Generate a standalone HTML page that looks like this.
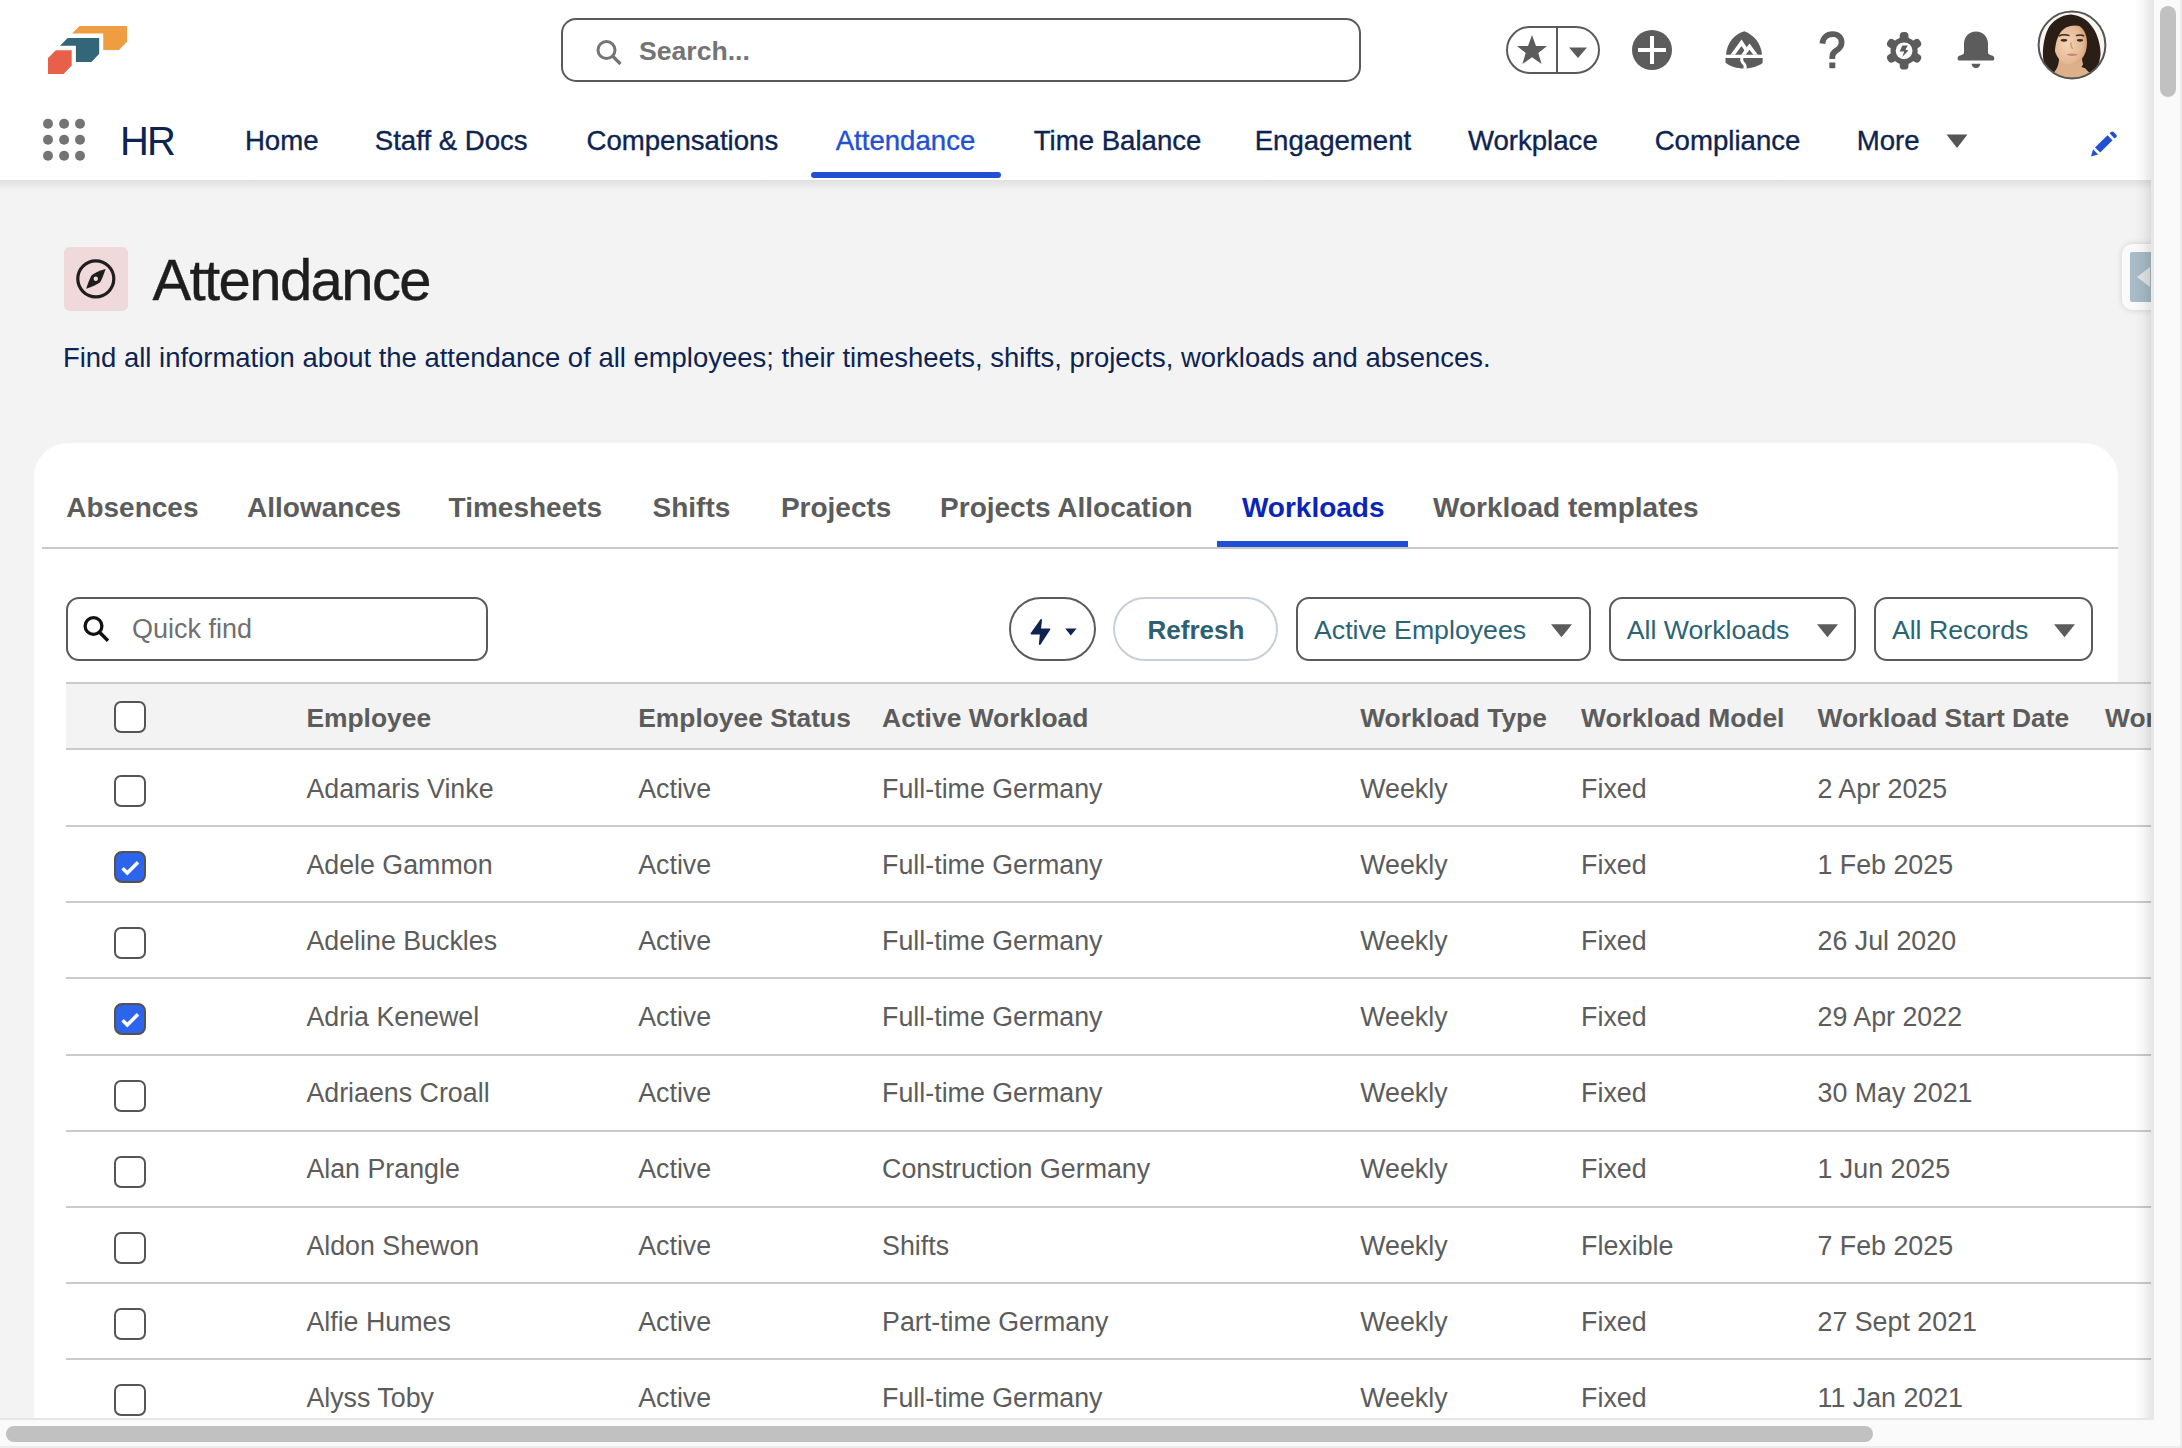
<!DOCTYPE html>
<html><head><meta charset="utf-8"><title>Attendance</title>
<style>
html,body{margin:0;padding:0;}
body{width:2182px;height:1448px;overflow:hidden;position:relative;background:#f3f3f3;font-family:"Liberation Sans", sans-serif;}
.a{position:absolute;}
.t{position:absolute;white-space:nowrap;}
</style></head><body>
<div class="a" style="left:0px;top:0px;width:2153px;height:180px;background:#fff;"></div>
<div class="a" style="left:0px;top:180px;width:2153px;height:10px;background:linear-gradient(#e0e0e0,#f3f3f3);"></div>
<svg class="a" style="left:0px;top:0px" width="200" height="90" viewBox="0 0 200 90">
<polygon fill="#f09d41" points="72,33.6 79.5,26 127,26 127,41.7 119,50 103.2,50 103.2,33.6"/>
<polygon fill="#336678" points="60,45.8 67.7,38 99.2,38 99.2,53.8 91.5,62 75.9,62 75.9,45.8"/>
<polygon fill="#e8604a" points="48,58 55.9,50.2 71.7,50.2 71.7,65.6 63.6,74 48,74"/>
</svg>
<div class="a" style="left:561px;top:18px;width:796px;height:60px;border:2px solid #5a5a5a;border-radius:15px;background:#fff;"></div>
<svg class="a" style="left:590px;top:34px" width="40" height="40" viewBox="0 0 40 40">
<circle cx="16.5" cy="16" r="8.5" fill="none" stroke="#747474" stroke-width="3"/>
<line x1="22.5" y1="22" x2="30.5" y2="30" stroke="#747474" stroke-width="3.2" stroke-linecap="butt"/>
</svg>
<div class="t" style="left:639.0px;top:37.5px;font-size:26.6px;line-height:26.6px;color:#747474;font-weight:bold;">Search...</div>
<div class="a" style="left:1506px;top:26px;width:90px;height:44px;border:2px solid #5a5a5a;border-radius:24px;background:#fff;"></div>
<div class="a" style="left:1556px;top:28px;width:2px;height:44px;background:#5a5a5a;"></div>
<svg class="a" style="left:1510px;top:28px" width="46" height="44" viewBox="0 0 46 44">
<polygon fill="#5c5c5c" points="22,7 26,18 37,18 28.3,24.9 31.6,36 22,29.3 12.4,36 15.7,24.9 7,18 18,18"/>
</svg>
<svg class="a" style="left:1565px;top:40px" width="26" height="24" viewBox="0 0 26 24">
<polygon fill="#5c5c5c" points="4,7.5 22,7.5 13,18"/>
</svg>
<svg class="a" style="left:1630px;top:28px" width="44" height="44" viewBox="0 0 44 44">
<circle cx="22" cy="22" r="20" fill="#5c5c5c"/>
<rect x="8" y="20" width="28" height="4" fill="#fff"/>
<rect x="20" y="8" width="4" height="28" fill="#fff"/>
</svg>
<svg class="a" style="left:1715px;top:25px" width="60" height="50" viewBox="0 0 60 50">
<defs><clipPath id="thc"><rect x="0" y="0" width="60" height="29.7"/></clipPath></defs>
<path fill="#5c5c5c" d="M11,29.7 C12,17 20,9 29.3,6.2 C39,10 46,18 47,29.7 Z"/>
<g clip-path="url(#thc)" fill="none" stroke="#fff" stroke-width="3.7" stroke-linejoin="miter" stroke-miterlimit="10">
<polyline points="16.3,31.8 26.5,17.8 31.2,24.8"/>
<polyline points="27.2,31.5 34.5,21.6 41.9,31.6"/>
</g>
<path fill="#5c5c5c" d="M10.4,33.1 L47.6,33.1 L47.6,38 C42,42 35,43.5 29,43.6 C22,43.5 15,41.5 10.6,37.8 Z"/>
<path fill="none" stroke="#fff" stroke-width="3" d="M27,32 C26,36 27.5,37.5 29.5,39.5 C30.5,41 30.5,42.5 29.5,45"/>
</svg>
<svg class="a" style="left:1810px;top:26px" width="44" height="50" viewBox="0 0 44 50">
<path fill="none" stroke="#5c5c5c" stroke-width="5.8" d="M12.4,17.6 C13,11.6 17,8.2 22.6,8.2 C28.3,8.2 31.6,12 31.6,16.6 C31.6,21 29,23 26,24.8 C23.5,26.4 22.3,28.3 22.3,31 L22.3,33"/>
<rect x="19.3" y="36.4" width="6" height="5.8" rx="0.8" fill="#5c5c5c"/>
</svg>
<svg class="a" style="left:1880px;top:25px" width="50" height="50" viewBox="0 0 50 50"><g fill="#5c5c5c"><circle cx="24.1" cy="25.8" r="13.6"/><rect x="19.70" y="7.00" width="8.8" height="10" rx="3.9" transform="rotate(0 24.1 25.8)"/><rect x="19.70" y="7.00" width="8.8" height="10" rx="3.9" transform="rotate(60 24.1 25.8)"/><rect x="19.70" y="7.00" width="8.8" height="10" rx="3.9" transform="rotate(120 24.1 25.8)"/><rect x="19.70" y="7.00" width="8.8" height="10" rx="3.9" transform="rotate(180 24.1 25.8)"/><rect x="19.70" y="7.00" width="8.8" height="10" rx="3.9" transform="rotate(240 24.1 25.8)"/><rect x="19.70" y="7.00" width="8.8" height="10" rx="3.9" transform="rotate(300 24.1 25.8)"/></g><circle cx="24.1" cy="25.8" r="8.4" fill="#fff"/><polygon fill="#5c5c5c" points="22.3,20.4 27.8,20.4 25.4,24.7 28.5,25.4 22.4,31.8 24.2,26.6 19.7,26.6"/></svg>
<svg class="a" style="left:1950px;top:25px" width="50" height="50" viewBox="0 0 50 50">
<path fill="#5c5c5c" d="M26,6.4 C19,6.4 14,12 14,18.5 L14,27.5 C14,29 12.5,29.8 10,30.5 C8,31 7.6,32.5 7.6,33.5 C7.6,34.8 8.3,35.6 9.5,35.6 L42.5,35.6 C43.7,35.6 44.3,34.8 44.3,33.5 C44.3,32.5 44,31 42,30.5 C39.5,29.8 38,29 38,27.5 L38,18.5 C38,12 33,6.4 26,6.4 Z"/>
<path fill="#5c5c5c" d="M21.4,38.8 L30.4,38.8 C30,41.5 28.5,43.2 26,43.2 C23.5,43.2 22,41.5 21.4,38.8 Z"/>
</svg>
<svg class="a" style="left:2036px;top:9px" width="72" height="72" viewBox="0 0 72 72">
<defs><clipPath id="avc"><circle cx="36" cy="36" r="33"/></clipPath>
<radialGradient id="skin" cx="0.4" cy="0.5" r="0.65"><stop offset="0" stop-color="#f3d5b6"/><stop offset="0.7" stop-color="#e6b894"/><stop offset="1" stop-color="#c9976f"/></radialGradient></defs>
<circle cx="36" cy="36" r="33" fill="#f8f6f0"/>
<g clip-path="url(#avc)">
<path fill="#2b1e16" d="M34.7,5.5 C25,6 16,12 12,20 C8,28 6.5,40 7,48 C7.5,56 10,62 14,70 L58,70 C61,62 63.5,54 64.5,46 C65,38 62,26 57,19 C52,11 44,6 34.7,5.5 Z"/>
<path fill="#ddb08a" d="M23,49 C23,56 21,62 13,68 L13,74 L60,74 L58,67 C50,62 46,56 46,49 Z"/>
<path fill="url(#skin)" d="M18,36 C17.5,24 24,15 34.5,14.5 C44.5,14.5 51,22 51,34 C51,46 44,55.5 34.7,55.8 C25,55.5 18.5,47 18,36 Z"/>
<path fill="#2b1e16" d="M11,42 C11,25 19,12 31,10 C40,9 47,12.5 51.5,20 C44,15.5 36,15.5 30,18.5 C23,22.5 19.5,31 18.8,44 Z"/>
<path fill="#2b1e16" d="M47.5,17 C52,23 53,34 51.5,44 C50.5,50 48,54 45.5,58 L57,62 C61,50 61.5,36 57.5,26 Z"/>
<path d="M22.5,27 Q28,24.8 33.5,26.6" stroke="#3a2a20" stroke-width="1.5" fill="none"/>
<path d="M40,26.6 Q44.5,25 48,27" stroke="#3a2a20" stroke-width="1.5" fill="none"/>
<ellipse cx="28" cy="31.3" rx="3.3" ry="1.4" fill="#3b2a20"/>
<ellipse cx="44" cy="31.3" rx="3.1" ry="1.4" fill="#3b2a20"/>
<path d="M35,33 Q34.5,38 36.9,39.8" stroke="#c99a76" stroke-width="1.3" fill="none"/>
<path d="M30.3,45.4 Q36,43.8 42.4,45.4 Q36,48.6 30.3,45.4 Z" fill="#c88679"/>
</g>
<circle cx="36" cy="36" r="33.4" fill="none" stroke="#555" stroke-width="2"/>
</svg>
<svg class="a" style="left:38px;top:113px" width="54" height="54" viewBox="0 0 54 54"><circle cx="10" cy="10.7" r="5" fill="#747474"/><circle cx="10" cy="26.8" r="5" fill="#747474"/><circle cx="10" cy="42.8" r="5" fill="#747474"/><circle cx="26.1" cy="10.7" r="5" fill="#747474"/><circle cx="26.1" cy="26.8" r="5" fill="#747474"/><circle cx="26.1" cy="42.8" r="5" fill="#747474"/><circle cx="42" cy="10.7" r="5" fill="#747474"/><circle cx="42" cy="26.8" r="5" fill="#747474"/><circle cx="42" cy="42.8" r="5" fill="#747474"/></svg>
<div class="t" style="left:120.0px;top:121.1px;font-size:40px;line-height:40px;color:#0d2452;font-weight:normal;letter-spacing:-2px;">HR</div>
<div class="t" style="left:244.9px;top:126.6px;font-size:27.6px;line-height:27.6px;color:#0d2452;font-weight:normal;-webkit-text-stroke:0.35px #0d2452;">Home</div>
<div class="t" style="left:374.8px;top:126.6px;font-size:27.6px;line-height:27.6px;color:#0d2452;font-weight:normal;-webkit-text-stroke:0.35px #0d2452;">Staff &amp; Docs</div>
<div class="t" style="left:586.5px;top:126.6px;font-size:27.6px;line-height:27.6px;color:#0d2452;font-weight:normal;-webkit-text-stroke:0.35px #0d2452;">Compensations</div>
<div class="t" style="left:835.7px;top:126.6px;font-size:27.6px;line-height:27.6px;color:#2250d4;font-weight:normal;-webkit-text-stroke:0.35px #2250d4;">Attendance</div>
<div class="t" style="left:1033.7px;top:126.6px;font-size:27.6px;line-height:27.6px;color:#0d2452;font-weight:normal;-webkit-text-stroke:0.35px #0d2452;">Time Balance</div>
<div class="t" style="left:1254.7px;top:126.6px;font-size:27.6px;line-height:27.6px;color:#0d2452;font-weight:normal;-webkit-text-stroke:0.35px #0d2452;">Engagement</div>
<div class="t" style="left:1467.9px;top:126.6px;font-size:27.6px;line-height:27.6px;color:#0d2452;font-weight:normal;-webkit-text-stroke:0.35px #0d2452;">Workplace</div>
<div class="t" style="left:1654.7px;top:126.6px;font-size:27.6px;line-height:27.6px;color:#0d2452;font-weight:normal;-webkit-text-stroke:0.35px #0d2452;">Compliance</div>
<div class="t" style="left:1856.7px;top:126.6px;font-size:27.6px;line-height:27.6px;color:#0d2452;font-weight:normal;-webkit-text-stroke:0.35px #0d2452;">More</div>
<div class="a" style="left:811px;top:172px;width:190px;height:6px;background:#2250d4;border-radius:3px;"></div>
<svg class="a" style="left:1940px;top:128px" width="34" height="26" viewBox="0 0 34 26">
<polygon fill="#555" points="6.5,6.5 27.5,6.5 17,20"/>
</svg>
<svg class="a" style="left:2080px;top:120px" width="50" height="50" viewBox="0 0 50 50">
<polygon fill="#2150d4" points="13.1,29.3 11,36.6 18.1,34.5"/>
<polygon fill="#2150d4" points="15,27.5 27.5,15.2 32.5,20.2 20.2,32.6"/>
<path fill="#2150d4" d="M29.7,13.3 L31,12 C31.8,11.2 32.8,11.2 33.6,12 L36.3,14.7 C37,15.4 37,16.4 36.3,17.2 L34.4,18.6 Z"/>
</svg>
<div class="a" style="left:64px;top:247px;width:64px;height:64px;background:#f0d9da;border-radius:6px;"></div>
<svg class="a" style="left:64px;top:247px" width="64" height="64" viewBox="0 0 64 64">
<circle cx="31.8" cy="31.8" r="18" fill="none" stroke="#1e1e1e" stroke-width="3.2"/>
<path fill="#1e1e1e" d="M41.6,22 Q38.8,30.5 36.2,35.2 Q31,39 22.2,41.7 Q25,33 27.6,28.3 Q32.5,24.6 41.6,22 Z"/>
<circle cx="31.8" cy="31.8" r="2.2" fill="#f0d9da"/>
</svg>
<div class="t" style="left:152.5px;top:251.1px;font-size:58px;line-height:58px;color:#1e1e1e;font-weight:normal;letter-spacing:-1.6px;-webkit-text-stroke:0.4px #1e1e1e;">Attendance</div>
<div class="t" style="left:63.0px;top:343.8px;font-size:27.45px;line-height:27.45px;color:#0d2452;font-weight:normal;">Find all information about the attendance of all employees; their timesheets, shifts, projects, workloads and absences.</div>
<div class="a" style="left:2122px;top:244px;width:40px;height:66px;background:#fafafa;border-radius:10px;box-shadow:0 0 6px rgba(0,0,0,0.15);"></div>
<div class="a" style="left:2130px;top:252px;width:30px;height:50px;background:linear-gradient(90deg,#a9bdc8,#a3b6c1);border-radius:2px;"></div>
<svg class="a" style="left:2130px;top:252px" width="24" height="50" viewBox="0 0 24 50">
<polygon fill="#e2e2e2" points="7,25 20,15 20,35"/></svg>
<div class="a" style="left:34px;top:443px;width:2084px;height:1100px;background:#fff;border-radius:34px 34px 0 0;"></div>
<div class="a" style="left:2118px;top:750px;width:35px;height:668px;background:#fff;"></div>
<div class="t" style="left:66.2px;top:493.6px;font-size:28px;line-height:28px;color:#5c5c5c;font-weight:bold;">Absences</div>
<div class="t" style="left:247.1px;top:493.6px;font-size:28px;line-height:28px;color:#5c5c5c;font-weight:bold;">Allowances</div>
<div class="t" style="left:448.6px;top:493.6px;font-size:28px;line-height:28px;color:#5c5c5c;font-weight:bold;">Timesheets</div>
<div class="t" style="left:652.5px;top:493.6px;font-size:28px;line-height:28px;color:#5c5c5c;font-weight:bold;">Shifts</div>
<div class="t" style="left:780.9px;top:493.6px;font-size:28px;line-height:28px;color:#5c5c5c;font-weight:bold;">Projects</div>
<div class="t" style="left:940.1px;top:493.6px;font-size:28px;line-height:28px;color:#5c5c5c;font-weight:bold;">Projects Allocation</div>
<div class="t" style="left:1241.9px;top:493.6px;font-size:28px;line-height:28px;color:#0b25b8;font-weight:bold;">Workloads</div>
<div class="t" style="left:1433.1px;top:493.6px;font-size:28px;line-height:28px;color:#5c5c5c;font-weight:bold;">Workload templates</div>
<div class="a" style="left:42px;top:547px;width:2076px;height:2px;background:#c9c9c9;"></div>
<div class="a" style="left:1217px;top:541px;width:191px;height:6px;background:#2150d4;"></div>
<div class="a" style="left:66px;top:597px;width:418px;height:60px;border:2px solid #5a5a5a;border-radius:13px;background:#fff;"></div>
<svg class="a" style="left:78px;top:611px" width="36" height="36" viewBox="0 0 36 36">
<circle cx="15.5" cy="15" r="8.4" fill="none" stroke="#111" stroke-width="3.3"/>
<line x1="21.3" y1="21" x2="30" y2="29.8" stroke="#111" stroke-width="3.4"/>
</svg>
<div class="t" style="left:132.0px;top:616.2px;font-size:27px;line-height:27px;color:#707070;font-weight:normal;">Quick find</div>
<div class="a" style="left:1009px;top:597px;width:83px;height:60px;border:2px solid #5a5a5a;border-radius:32px;background:#fff;"></div>
<svg class="a" style="left:1020px;top:605px" width="70" height="50" viewBox="0 0 70 50">
<path fill="#0e2350" stroke="#0e2350" stroke-width="1.6" stroke-linejoin="round" d="M21.2,14.8 L11.3,28.7 L20.7,28.7 L19.7,39.2 L29.5,24.2 L20.2,24.2 Z"/>
<polygon fill="#0e2350" points="45.2,23.5 56.6,23.5 50.8,30.4"/>
</svg>
<div class="a" style="left:1113px;top:597px;width:161px;height:60px;border:2px solid #c6cfdb;border-radius:32px;background:#fff;"></div>
<div class="t" style="left:1147.5px;top:617.2px;font-size:26px;line-height:26px;color:#2d6073;font-weight:bold;">Refresh</div>
<div class="a" style="left:1295.6px;top:597px;width:291.60000000000014px;height:60px;border:2px solid #5a5a5a;border-radius:13px;background:#fff;"></div>
<div class="t" style="left:1314.0px;top:616.6px;font-size:26.7px;line-height:26.7px;color:#2a6475;font-weight:normal;">Active Employees</div>
<svg class="a" style="left:1549.3px;top:620px" width="26" height="22" viewBox="0 0 26 22"><polygon fill="#5c5c5c" points="2,4.3 23,4.3 12.5,17.2"/></svg>
<div class="a" style="left:1608.6px;top:597px;width:243.80000000000018px;height:60px;border:2px solid #5a5a5a;border-radius:13px;background:#fff;"></div>
<div class="t" style="left:1626.7px;top:616.6px;font-size:26.7px;line-height:26.7px;color:#2a6475;font-weight:normal;">All Workloads</div>
<svg class="a" style="left:1814.9px;top:620px" width="26" height="22" viewBox="0 0 26 22"><polygon fill="#5c5c5c" points="2,4.3 23,4.3 12.5,17.2"/></svg>
<div class="a" style="left:1873.6px;top:597px;width:215.70000000000027px;height:60px;border:2px solid #5a5a5a;border-radius:13px;background:#fff;"></div>
<div class="t" style="left:1891.9px;top:616.6px;font-size:26.7px;line-height:26.7px;color:#2a6475;font-weight:normal;">All Records</div>
<svg class="a" style="left:2052px;top:620px" width="26" height="22" viewBox="0 0 26 22"><polygon fill="#5c5c5c" points="2,4.3 23,4.3 12.5,17.2"/></svg>
<div class="a" style="left:66px;top:682px;width:2087px;height:68px;background:#f3f3f3;border-top:2px solid #cbcbcb;border-bottom:2px solid #cbcbcb;box-sizing:border-box;"></div>
<div class="a" style="left:114px;top:701px;width:28px;height:28px;border:2px solid #555;border-radius:7px;background:#fff;"></div>
<div class="t" style="left:306.4px;top:704.6px;font-size:26.4px;line-height:26.4px;color:#5c5c5c;font-weight:bold;">Employee</div>
<div class="t" style="left:638.2px;top:704.6px;font-size:26.4px;line-height:26.4px;color:#5c5c5c;font-weight:bold;">Employee Status</div>
<div class="t" style="left:882.1px;top:704.6px;font-size:26.4px;line-height:26.4px;color:#5c5c5c;font-weight:bold;">Active Workload</div>
<div class="t" style="left:1360.2px;top:704.6px;font-size:26.4px;line-height:26.4px;color:#5c5c5c;font-weight:bold;">Workload Type</div>
<div class="t" style="left:1581.1px;top:704.6px;font-size:26.4px;line-height:26.4px;color:#5c5c5c;font-weight:bold;">Workload Model</div>
<div class="t" style="left:1817.5px;top:704.6px;font-size:26.4px;line-height:26.4px;color:#5c5c5c;font-weight:bold;">Workload Start Date</div>
<div class="t" style="left:2105.0px;top:704.6px;font-size:26.4px;line-height:26.4px;color:#5c5c5c;font-weight:bold;">Workload End Date</div>
<div class="a" style="left:66px;top:825px;width:2087px;height:2px;background:#cbcbcb;"></div>
<div class="a" style="left:114px;top:775px;width:28px;height:28px;border:2px solid #555;border-radius:7px;background:#fff;"></div>
<div class="t" style="left:306.4px;top:775.7px;font-size:26.8px;line-height:26.8px;color:#5c5c5c;font-weight:normal;">Adamaris Vinke</div>
<div class="t" style="left:638.2px;top:775.7px;font-size:26.8px;line-height:26.8px;color:#5c5c5c;font-weight:normal;">Active</div>
<div class="t" style="left:882.1px;top:775.7px;font-size:26.8px;line-height:26.8px;color:#5c5c5c;font-weight:normal;">Full-time Germany</div>
<div class="t" style="left:1360.2px;top:775.7px;font-size:26.8px;line-height:26.8px;color:#5c5c5c;font-weight:normal;">Weekly</div>
<div class="t" style="left:1581.1px;top:775.7px;font-size:26.8px;line-height:26.8px;color:#5c5c5c;font-weight:normal;">Fixed</div>
<div class="t" style="left:1817.5px;top:775.7px;font-size:26.8px;line-height:26.8px;color:#5c5c5c;font-weight:normal;">2 Apr 2025</div>
<div class="a" style="left:66px;top:901px;width:2087px;height:2px;background:#cbcbcb;"></div>
<svg class="a" style="left:113px;top:850px" width="34" height="34" viewBox="0 0 34 34"><rect x="2" y="2" width="30" height="30" rx="7" fill="#2c64ec" stroke="#55534c" stroke-width="2"/><polyline points="9.6,18.3 14.3,23 25,12.2" fill="none" stroke="#fff" stroke-width="3.6"/></svg>
<div class="t" style="left:306.4px;top:851.8px;font-size:26.8px;line-height:26.8px;color:#5c5c5c;font-weight:normal;">Adele Gammon</div>
<div class="t" style="left:638.2px;top:851.8px;font-size:26.8px;line-height:26.8px;color:#5c5c5c;font-weight:normal;">Active</div>
<div class="t" style="left:882.1px;top:851.8px;font-size:26.8px;line-height:26.8px;color:#5c5c5c;font-weight:normal;">Full-time Germany</div>
<div class="t" style="left:1360.2px;top:851.8px;font-size:26.8px;line-height:26.8px;color:#5c5c5c;font-weight:normal;">Weekly</div>
<div class="t" style="left:1581.1px;top:851.8px;font-size:26.8px;line-height:26.8px;color:#5c5c5c;font-weight:normal;">Fixed</div>
<div class="t" style="left:1817.5px;top:851.8px;font-size:26.8px;line-height:26.8px;color:#5c5c5c;font-weight:normal;">1 Feb 2025</div>
<div class="a" style="left:66px;top:977px;width:2087px;height:2px;background:#cbcbcb;"></div>
<div class="a" style="left:114px;top:927px;width:28px;height:28px;border:2px solid #555;border-radius:7px;background:#fff;"></div>
<div class="t" style="left:306.4px;top:928.0px;font-size:26.8px;line-height:26.8px;color:#5c5c5c;font-weight:normal;">Adeline Buckles</div>
<div class="t" style="left:638.2px;top:928.0px;font-size:26.8px;line-height:26.8px;color:#5c5c5c;font-weight:normal;">Active</div>
<div class="t" style="left:882.1px;top:928.0px;font-size:26.8px;line-height:26.8px;color:#5c5c5c;font-weight:normal;">Full-time Germany</div>
<div class="t" style="left:1360.2px;top:928.0px;font-size:26.8px;line-height:26.8px;color:#5c5c5c;font-weight:normal;">Weekly</div>
<div class="t" style="left:1581.1px;top:928.0px;font-size:26.8px;line-height:26.8px;color:#5c5c5c;font-weight:normal;">Fixed</div>
<div class="t" style="left:1817.5px;top:928.0px;font-size:26.8px;line-height:26.8px;color:#5c5c5c;font-weight:normal;">26 Jul 2020</div>
<div class="a" style="left:66px;top:1054px;width:2087px;height:2px;background:#cbcbcb;"></div>
<svg class="a" style="left:113px;top:1002px" width="34" height="34" viewBox="0 0 34 34"><rect x="2" y="2" width="30" height="30" rx="7" fill="#2c64ec" stroke="#55534c" stroke-width="2"/><polyline points="9.6,18.3 14.3,23 25,12.2" fill="none" stroke="#fff" stroke-width="3.6"/></svg>
<div class="t" style="left:306.4px;top:1004.1px;font-size:26.8px;line-height:26.8px;color:#5c5c5c;font-weight:normal;">Adria Kenewel</div>
<div class="t" style="left:638.2px;top:1004.1px;font-size:26.8px;line-height:26.8px;color:#5c5c5c;font-weight:normal;">Active</div>
<div class="t" style="left:882.1px;top:1004.1px;font-size:26.8px;line-height:26.8px;color:#5c5c5c;font-weight:normal;">Full-time Germany</div>
<div class="t" style="left:1360.2px;top:1004.1px;font-size:26.8px;line-height:26.8px;color:#5c5c5c;font-weight:normal;">Weekly</div>
<div class="t" style="left:1581.1px;top:1004.1px;font-size:26.8px;line-height:26.8px;color:#5c5c5c;font-weight:normal;">Fixed</div>
<div class="t" style="left:1817.5px;top:1004.1px;font-size:26.8px;line-height:26.8px;color:#5c5c5c;font-weight:normal;">29 Apr 2022</div>
<div class="a" style="left:66px;top:1130px;width:2087px;height:2px;background:#cbcbcb;"></div>
<div class="a" style="left:114px;top:1080px;width:28px;height:28px;border:2px solid #555;border-radius:7px;background:#fff;"></div>
<div class="t" style="left:306.4px;top:1080.2px;font-size:26.8px;line-height:26.8px;color:#5c5c5c;font-weight:normal;">Adriaens Croall</div>
<div class="t" style="left:638.2px;top:1080.2px;font-size:26.8px;line-height:26.8px;color:#5c5c5c;font-weight:normal;">Active</div>
<div class="t" style="left:882.1px;top:1080.2px;font-size:26.8px;line-height:26.8px;color:#5c5c5c;font-weight:normal;">Full-time Germany</div>
<div class="t" style="left:1360.2px;top:1080.2px;font-size:26.8px;line-height:26.8px;color:#5c5c5c;font-weight:normal;">Weekly</div>
<div class="t" style="left:1581.1px;top:1080.2px;font-size:26.8px;line-height:26.8px;color:#5c5c5c;font-weight:normal;">Fixed</div>
<div class="t" style="left:1817.5px;top:1080.2px;font-size:26.8px;line-height:26.8px;color:#5c5c5c;font-weight:normal;">30 May 2021</div>
<div class="a" style="left:66px;top:1206px;width:2087px;height:2px;background:#cbcbcb;"></div>
<div class="a" style="left:114px;top:1156px;width:28px;height:28px;border:2px solid #555;border-radius:7px;background:#fff;"></div>
<div class="t" style="left:306.4px;top:1156.4px;font-size:26.8px;line-height:26.8px;color:#5c5c5c;font-weight:normal;">Alan Prangle</div>
<div class="t" style="left:638.2px;top:1156.4px;font-size:26.8px;line-height:26.8px;color:#5c5c5c;font-weight:normal;">Active</div>
<div class="t" style="left:882.1px;top:1156.4px;font-size:26.8px;line-height:26.8px;color:#5c5c5c;font-weight:normal;">Construction Germany</div>
<div class="t" style="left:1360.2px;top:1156.4px;font-size:26.8px;line-height:26.8px;color:#5c5c5c;font-weight:normal;">Weekly</div>
<div class="t" style="left:1581.1px;top:1156.4px;font-size:26.8px;line-height:26.8px;color:#5c5c5c;font-weight:normal;">Fixed</div>
<div class="t" style="left:1817.5px;top:1156.4px;font-size:26.8px;line-height:26.8px;color:#5c5c5c;font-weight:normal;">1 Jun 2025</div>
<div class="a" style="left:66px;top:1282px;width:2087px;height:2px;background:#cbcbcb;"></div>
<div class="a" style="left:114px;top:1232px;width:28px;height:28px;border:2px solid #555;border-radius:7px;background:#fff;"></div>
<div class="t" style="left:306.4px;top:1232.5px;font-size:26.8px;line-height:26.8px;color:#5c5c5c;font-weight:normal;">Aldon Shewon</div>
<div class="t" style="left:638.2px;top:1232.5px;font-size:26.8px;line-height:26.8px;color:#5c5c5c;font-weight:normal;">Active</div>
<div class="t" style="left:882.1px;top:1232.5px;font-size:26.8px;line-height:26.8px;color:#5c5c5c;font-weight:normal;">Shifts</div>
<div class="t" style="left:1360.2px;top:1232.5px;font-size:26.8px;line-height:26.8px;color:#5c5c5c;font-weight:normal;">Weekly</div>
<div class="t" style="left:1581.1px;top:1232.5px;font-size:26.8px;line-height:26.8px;color:#5c5c5c;font-weight:normal;">Flexible</div>
<div class="t" style="left:1817.5px;top:1232.5px;font-size:26.8px;line-height:26.8px;color:#5c5c5c;font-weight:normal;">7 Feb 2025</div>
<div class="a" style="left:66px;top:1358px;width:2087px;height:2px;background:#cbcbcb;"></div>
<div class="a" style="left:114px;top:1308px;width:28px;height:28px;border:2px solid #555;border-radius:7px;background:#fff;"></div>
<div class="t" style="left:306.4px;top:1308.6px;font-size:26.8px;line-height:26.8px;color:#5c5c5c;font-weight:normal;">Alfie Humes</div>
<div class="t" style="left:638.2px;top:1308.6px;font-size:26.8px;line-height:26.8px;color:#5c5c5c;font-weight:normal;">Active</div>
<div class="t" style="left:882.1px;top:1308.6px;font-size:26.8px;line-height:26.8px;color:#5c5c5c;font-weight:normal;">Part-time Germany</div>
<div class="t" style="left:1360.2px;top:1308.6px;font-size:26.8px;line-height:26.8px;color:#5c5c5c;font-weight:normal;">Weekly</div>
<div class="t" style="left:1581.1px;top:1308.6px;font-size:26.8px;line-height:26.8px;color:#5c5c5c;font-weight:normal;">Fixed</div>
<div class="t" style="left:1817.5px;top:1308.6px;font-size:26.8px;line-height:26.8px;color:#5c5c5c;font-weight:normal;">27 Sept 2021</div>
<div class="a" style="left:66px;top:1434px;width:2087px;height:2px;background:#cbcbcb;"></div>
<div class="a" style="left:114px;top:1384px;width:28px;height:28px;border:2px solid #555;border-radius:7px;background:#fff;"></div>
<div class="t" style="left:306.4px;top:1384.7px;font-size:26.8px;line-height:26.8px;color:#5c5c5c;font-weight:normal;">Alyss Toby</div>
<div class="t" style="left:638.2px;top:1384.7px;font-size:26.8px;line-height:26.8px;color:#5c5c5c;font-weight:normal;">Active</div>
<div class="t" style="left:882.1px;top:1384.7px;font-size:26.8px;line-height:26.8px;color:#5c5c5c;font-weight:normal;">Full-time Germany</div>
<div class="t" style="left:1360.2px;top:1384.7px;font-size:26.8px;line-height:26.8px;color:#5c5c5c;font-weight:normal;">Weekly</div>
<div class="t" style="left:1581.1px;top:1384.7px;font-size:26.8px;line-height:26.8px;color:#5c5c5c;font-weight:normal;">Fixed</div>
<div class="t" style="left:1817.5px;top:1384.7px;font-size:26.8px;line-height:26.8px;color:#5c5c5c;font-weight:normal;">11 Jan 2021</div>
<div class="a" style="left:2134px;top:0px;width:18px;height:1418px;background:linear-gradient(90deg,rgba(0,0,0,0),rgba(0,0,0,0.03) 50%,rgba(0,0,0,0.10));"></div>
<div class="a" style="left:2151px;top:0px;width:3px;height:1418px;background:#e8e8e8;"></div>
<div class="a" style="left:2154px;top:0px;width:28px;height:1448px;background:#fafafa;"></div>
<div class="a" style="left:2180px;top:0px;width:2px;height:1448px;background:#ededed;"></div>
<div class="a" style="left:2160px;top:6px;width:16px;height:91px;background:#c1c1c1;border-radius:8px;"></div>
<div class="a" style="left:0px;top:1418px;width:2154px;height:30px;background:#fafafa;"></div>
<div class="a" style="left:0px;top:1418px;width:2154px;height:2px;background:#e6e6e6;"></div>
<div class="a" style="left:0px;top:1446px;width:2182px;height:2px;background:#ececec;"></div>
<div class="a" style="left:6px;top:1426px;width:1867px;height:16px;background:#c1c1c1;border-radius:8px;"></div>
</body></html>
